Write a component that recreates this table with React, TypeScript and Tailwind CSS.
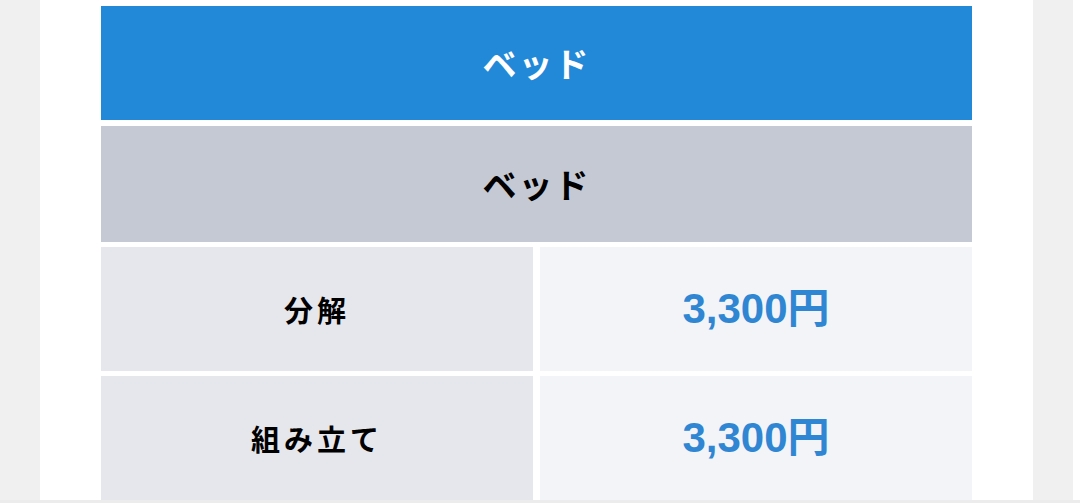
import React from 'react';

type PriceRow = {
  label: string;
  price: string;
};

const rows: PriceRow[] = [
  { label: '分解', price: '3,300円' },
  { label: '組み立て', price: '3,300円' },
];

const font = { fontFamily: '"Noto Sans CJK JP", "Noto Sans", sans-serif' };
const priceFont = { fontFamily: '"Liberation Sans", "Noto Sans CJK JP", sans-serif' };

const App: React.FC = () => {
  return (
    <div className="flex flex-col h-[503px] w-[1080px] overflow-hidden bg-white" style={font}>
      <div className="flex flex-1 min-h-0">
        <div className="w-[40px] bg-[#f0f0f0]" />
        <main className="flex-1 bg-white px-[61px] pt-[6px] overflow-hidden">
          <div className="flex flex-col">
            <div className="h-[114px] bg-[#2289d8] flex items-center justify-center">
              <h2 className="text-white font-bold text-[34px] tracking-[2px] leading-none">ベッド</h2>
            </div>
            <div className="mt-[6px] h-[116px] bg-[#c5c9d3] flex items-center justify-center">
              <h3 className="text-black font-bold text-[34px] tracking-[2px] leading-none">ベッド</h3>
            </div>
            {rows.map((row, i) => (
              <div key={i} className="mt-[5px] flex gap-[7px] h-[124px]">
                <div className="w-[432px] bg-[#e6e7ec] flex items-center justify-center">
                  <span className="text-black font-bold text-[29px] tracking-[4px] leading-none">{row.label}</span>
                </div>
                <div className="flex-1 bg-[#f3f4f7] flex items-center justify-center">
                  <span className="text-[#2f86d2] font-bold text-[42px] leading-none" style={priceFont}>
                    {row.price}
                  </span>
                </div>
              </div>
            ))}
          </div>
        </main>
        <div className="w-[40px] bg-[#f0f0f0]" />
        <div className="w-[7px] bg-white" />
      </div>
      <div className="h-[3px] bg-[#ececec]" />
    </div>
  );
};

export default App;
